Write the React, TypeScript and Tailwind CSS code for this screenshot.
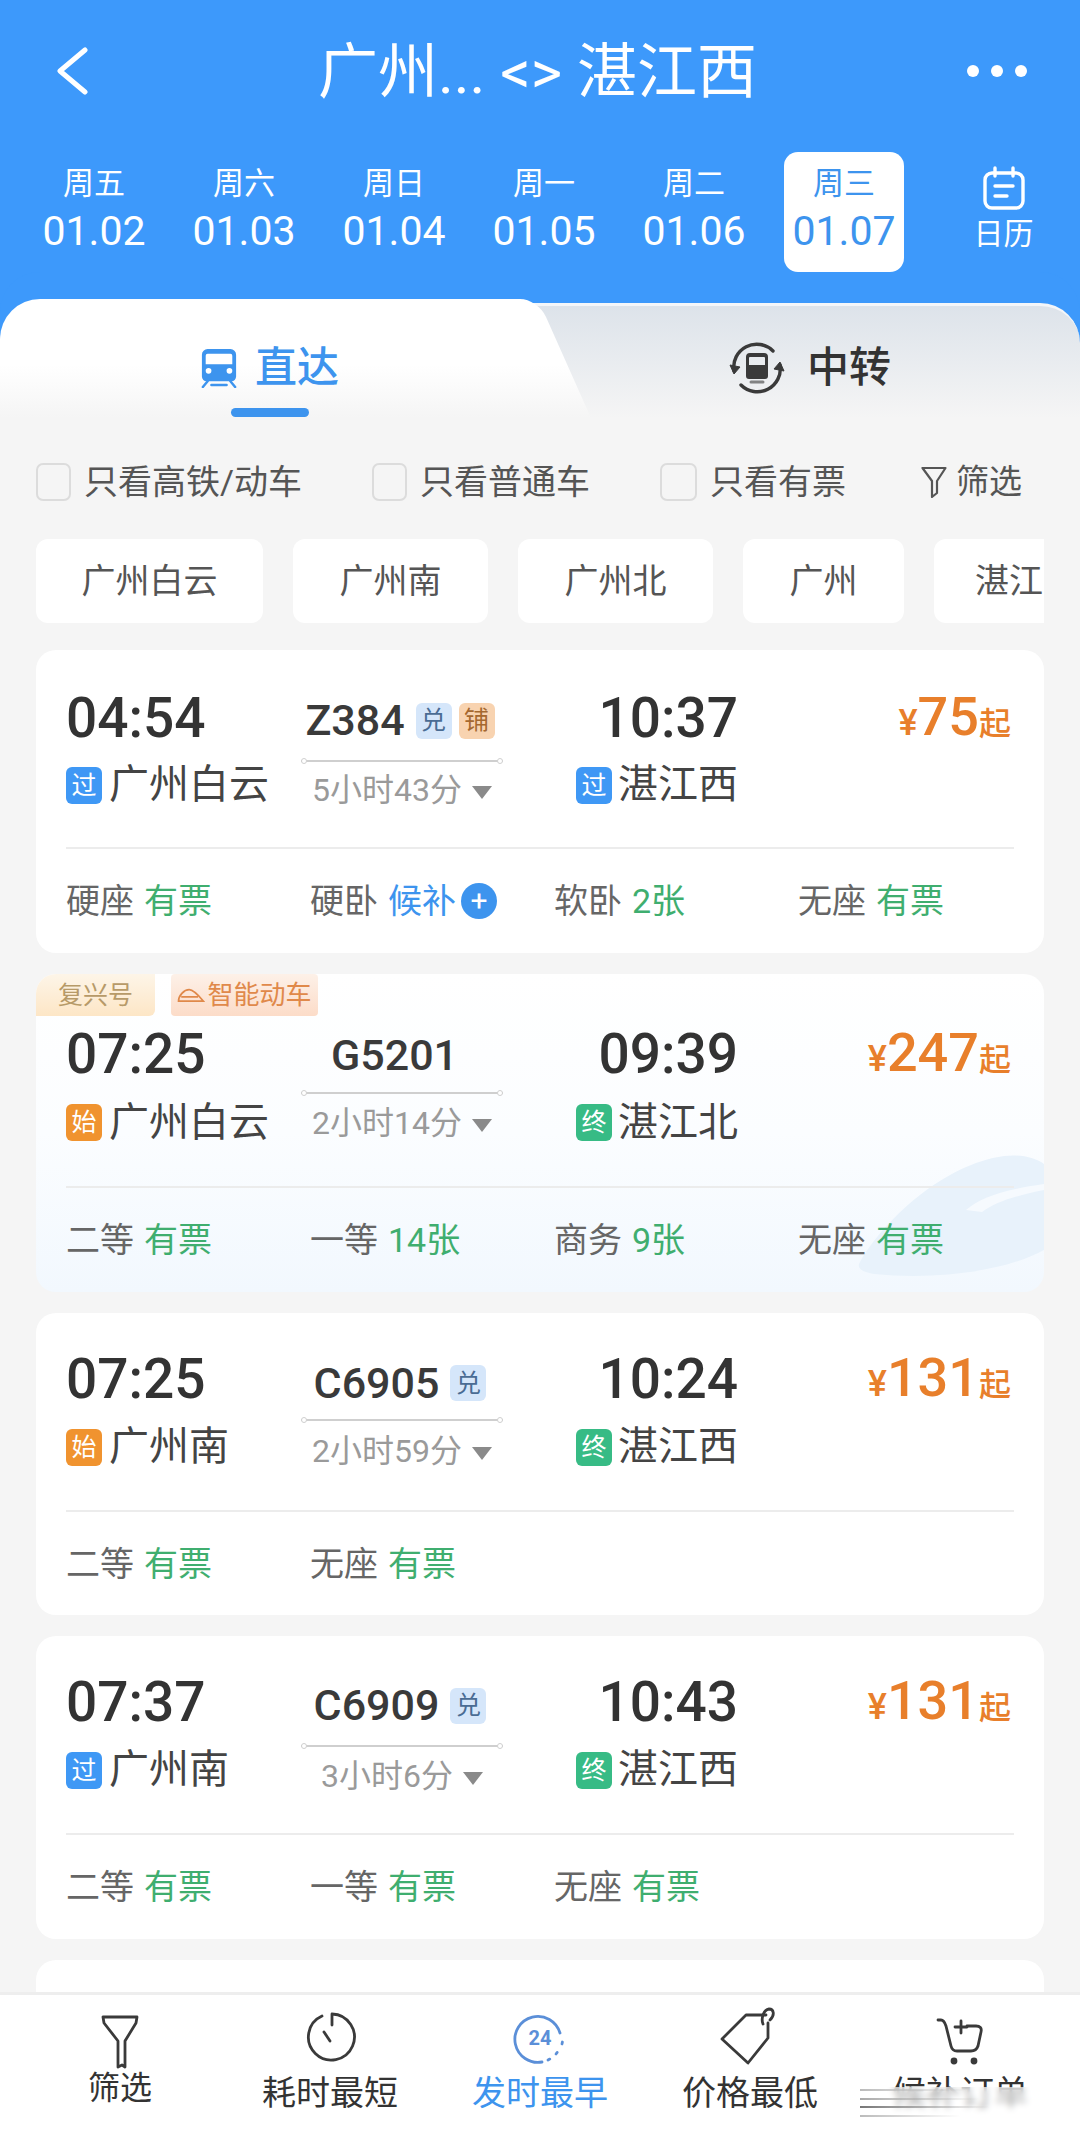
import type { ReactNode } from 'react';

type Seat = { name: string; value: string; tone?: 'green' | 'blue'; plus?: boolean };

type Train = {
  depart: string;
  arrive: string;
  code: string;
  flags: { label: string; className: string }[];
  from: string;
  fromTag: { label: string; className: string };
  to: string;
  toTag: { label: string; className: string };
  duration: string;
  price: string;
  seats: Seat[];
  cardClass: string;
  padClass: string;
  rowClass: string;
  codeClass: string;
  lineClass: string;
  fuxing?: boolean;
};

const tagPass = { label: '过', className: 'bg-[#3f98f5]' };
const tagStart = { label: '始', className: 'bg-[#f0932f]' };
const tagEnd = { label: '终', className: 'bg-[#37bb85]' };
const flagRedeem = { label: '兑', className: 'bg-[#d5e6fa] text-[#4a6c94]' };
const flagBerth = { label: '铺', className: 'bg-[#f8d3b0] text-[#a5682f]' };

const trains: Train[] = [
  {
    depart: '04:54',
    arrive: '10:37',
    code: 'Z384',
    flags: [flagRedeem, flagBerth],
    from: '广州白云',
    fromTag: tagPass,
    to: '湛江西',
    toTag: tagPass,
    duration: '5小时43分',
    price: '75',
    seats: [
      { name: '硬座', value: '有票' },
      { name: '硬卧', value: '候补', tone: 'blue', plus: true },
      { name: '软卧', value: '2张' },
      { name: '无座', value: '有票' },
    ],
    cardClass: 'h-[303px] bg-white',
    padClass: 'pt-[39px]',
    rowClass: 'h-[80px]',
    codeClass: 'pt-[7px]',
    lineClass: 'mt-[15px] mb-[8px]',
  },
  {
    depart: '07:25',
    arrive: '09:39',
    code: 'G5201',
    flags: [],
    from: '广州白云',
    fromTag: tagStart,
    to: '湛江北',
    toTag: tagEnd,
    duration: '2小时14分',
    price: '247',
    seats: [
      { name: '二等', value: '有票' },
      { name: '一等', value: '14张' },
      { name: '商务', value: '9张' },
      { name: '无座', value: '有票' },
    ],
    cardClass: 'h-[318px] bg-gradient-to-b from-white via-[#fbfdff] to-[#f2f8fe]',
    padClass: 'pt-[51px]',
    rowClass: 'h-[83px]',
    codeClass: 'pt-[4px]',
    lineClass: 'mt-[11px] mb-[9px]',
    fuxing: true,
  },
  {
    depart: '07:25',
    arrive: '10:24',
    code: 'C6905',
    flags: [flagRedeem],
    from: '广州南',
    fromTag: tagStart,
    to: '湛江西',
    toTag: tagEnd,
    duration: '2小时59分',
    price: '131',
    seats: [
      { name: '二等', value: '有票' },
      { name: '无座', value: '有票' },
    ],
    cardClass: 'h-[302px] bg-white',
    padClass: 'pt-[37px]',
    rowClass: 'h-[82px]',
    codeClass: 'pt-[10px]',
    lineClass: 'mt-[13px] mb-[10px]',
  },
  {
    depart: '07:37',
    arrive: '10:43',
    code: 'C6909',
    flags: [flagRedeem],
    from: '广州南',
    fromTag: tagPass,
    to: '湛江西',
    toTag: tagEnd,
    duration: '3小时6分',
    price: '131',
    seats: [
      { name: '二等', value: '有票' },
      { name: '一等', value: '有票' },
      { name: '无座', value: '有票' },
    ],
    cardClass: 'h-[303px] bg-white',
    padClass: 'pt-[37px]',
    rowClass: 'h-[82px]',
    codeClass: 'pt-[9px]',
    lineClass: 'mt-[16px] mb-[9px]',
  },
];

const dates = [
  { week: '周五', day: '01.02' },
  { week: '周六', day: '01.03' },
  { week: '周日', day: '01.04' },
  { week: '周一', day: '01.05' },
  { week: '周二', day: '01.06' },
  { week: '周三', day: '01.07', active: true },
];

const stations = [
  { name: '广州白云', className: 'w-[227px]' },
  { name: '广州南', className: 'w-[195px]' },
  { name: '广州北', className: 'w-[195px]' },
  { name: '广州', className: 'w-[161px]' },
  { name: '湛江', className: 'w-[150px] shrink-0' },
];

function TrainFront({ className }: { className: string }) {
  return (
    <svg viewBox="0 0 40 42" className={className} fill="currentColor">
      <path d="M8 1h24a6 6 0 0 1 6 6v23a5 5 0 0 1-5 5H7a5 5 0 0 1-5-5V7a6 6 0 0 1 6-6Zm0 5a2 2 0 0 0-2 2v9h28V8a2 2 0 0 0-2-2H8Z" fillRule="evenodd" />
      <circle cx="9" cy="24" r="3" fill="#fff" />
      <circle cx="31" cy="24" r="3" fill="#fff" />
      <path d="M8 35 3 41M32 35l5 6M12 39h16" stroke="currentColor" strokeWidth="2.6" strokeLinecap="round" fill="none" />
    </svg>
  );
}

function TransferIcon() {
  return (
    <svg viewBox="0 0 56 56" className="h-[56px] w-[56px] text-[#3a3a3a]" fill="none" stroke="currentColor">
      <path d="M5 31A23 23 0 0 1 44 11" strokeWidth="3.4" strokeLinecap="round" />
      <path d="M51 25A23 23 0 0 1 12 45" strokeWidth="3.4" strokeLinecap="round" />
      <path d="M1 25l4 9 6-7Z" fill="currentColor" strokeWidth="1" />
      <path d="M55 31l-4-9-6 7Z" fill="currentColor" strokeWidth="1" />
      <path
        d="M21 13h14a4 4 0 0 1 4 4v19a3 3 0 0 1-3 3H20a3 3 0 0 1-3-3V17a4 4 0 0 1 4-4Zm0 4a1 1 0 0 0-1 1v7h16v-7a1 1 0 0 0-1-1H21Z"
        fill="currentColor"
        fillRule="evenodd"
        stroke="none"
      />
      <path d="M22 42h12" strokeWidth="3" strokeLinecap="round" opacity="0.6" />
    </svg>
  );
}

function FunnelSmall() {
  return (
    <svg viewBox="0 0 26 32" className="h-[32px] w-[26px] text-[#555]" fill="none" stroke="currentColor" strokeWidth="2.2" strokeLinejoin="round">
      <path d="M1.5 2h23L16 15v12l-5 4V15Z" />
    </svg>
  );
}

function BottomIcon({ children }: { children: ReactNode }) {
  return (
    <svg viewBox="0 0 60 60" className="h-[60px] w-[60px] overflow-visible" fill="none" stroke="currentColor" strokeWidth="2.8" strokeLinecap="round" strokeLinejoin="round">
      {children}
    </svg>
  );
}

function Checkbox({ label, wide }: { label: string; wide?: boolean }) {
  return (
    <div className="flex items-center gap-[13px]">
      <span className={`h-[38px] rounded-[7px] border-2 border-[#dcdcdc] bg-[#f5f5f5] ${wide ? 'w-[37px]' : 'w-[35px]'}`} />
      <span className="text-[34px] leading-none text-[#555]">{label}</span>
    </div>
  );
}

function StationTag({ tag }: { tag: { label: string; className: string } }) {
  return (
    <span className={`flex h-[37px] w-[36px] items-center justify-center rounded-[6px] text-[25px] leading-none text-[#fff] ${tag.className}`}>
      {tag.label}
    </span>
  );
}

function TrainCard({ train }: { train: Train }) {
  return (
    <section className={`relative shrink-0 overflow-hidden rounded-[20px] px-[30px] ${train.cardClass} ${train.padClass}`}>
      {train.fuxing && (
        <>
          <svg viewBox="0 0 190 130" className="absolute bottom-[12px] right-0 h-[130px] w-[190px]">
            <path d="M6 112C30 70 90 14 150 6c18-2 32 2 40 8v86c-40 22-110 30-170 24-12-2-18-6-14-12Z" fill="#e8f2fb" />
            <path d="M112 60c14-12 36-20 78-26v6c-30 6-48 12-62 22Z" fill="#f6fafe" />
          </svg>
          <div className="absolute left-0 top-0 flex items-start gap-[16px]">
            <span className="flex h-[42px] w-[119px] items-center justify-center rounded-br-[6px] rounded-tl-[14px] bg-gradient-to-b from-[#fdf5e8] to-[#fde6c6] text-[25px] leading-none text-[#b79a68]">
              复兴号
            </span>
            <span className="flex h-[42px] w-[147px] items-center justify-center gap-[2px] rounded-[4px] bg-gradient-to-b from-[#fdf1e8] to-[#fcdcc8] text-[26px] leading-none text-[#e0894a]">
              <svg viewBox="0 0 30 18" className="h-[16px] w-[28px]" fill="none" stroke="currentColor" strokeWidth="2">
                <path d="M1 16c0-6 6-13 12-13 5 0 11 7 16 13Z" />
                <path d="M4 11h19" />
              </svg>
              智能动车
            </span>
          </div>
        </>
      )}

      <div className="relative grid grid-cols-[235px_202px_235px_273px]">
        <div className="h-[56px] text-[55px] font-medium leading-[59px] text-[#333]">{train.depart}</div>
        <div className={`flex h-[56px] items-center justify-center gap-[11px] pr-[4px] ${train.codeClass}`}>
          <span className="text-[43px] font-medium leading-none text-[#3a3a3a]">{train.code}</span>
          <span className="flex gap-[7px]">
            {train.flags.map((flag) => (
              <span
                key={flag.label}
                className={`flex h-[36px] w-[36px] items-center justify-center rounded-[6px] text-[25px] leading-none ${flag.className}`}
              >
                {flag.label}
              </span>
            ))}
          </span>
        </div>
        <div className="h-[56px] text-right text-[55px] font-medium leading-[59px] text-[#333]">{train.arrive}</div>
        <div className="flex h-[56px] items-baseline justify-end text-[#e87f2b]">
          <span className="text-[36px] font-medium leading-none">¥</span>
          <span className="text-[54px] font-medium leading-[56px]">{train.price}</span>
          <span className="text-[32px] font-medium leading-none">起</span>
        </div>

        <div className={`flex items-center gap-[7px] ${train.rowClass}`}>
          <StationTag tag={train.fromTag} />
          <span className="text-[40px] leading-none text-[#444]">{train.from}</span>
        </div>
        <div className={`flex flex-col items-center ${train.rowClass}`}>
          <div className={`relative h-[2px] w-full bg-[#cfcfcf] ${train.lineClass}`}>
            <span className="absolute -top-[2px] left-0 h-[6px] w-[6px] rounded-full border border-[#cfcfcf] bg-white" />
            <span className="absolute -top-[2px] right-0 h-[6px] w-[6px] rounded-full border border-[#cfcfcf] bg-white" />
          </div>
          <div className="flex items-center gap-[10px]">
            <span className="text-[32px] leading-[40px] text-[#9a9a9a]">{train.duration}</span>
            <span className="mt-[5px] h-0 w-0 border-x-[10px] border-t-[13px] border-x-transparent border-t-[#8a8a8a]" />
          </div>
        </div>
        <div className={`flex items-center justify-end gap-[6px] ${train.rowClass}`}>
          <StationTag tag={train.toTag} />
          <span className="text-[40px] leading-none text-[#444]">{train.to}</span>
        </div>
        <div className={train.rowClass} />
      </div>

      <div className="relative mt-[22px] h-[2px] bg-[#ececec]" />
      <div className="relative grid h-[106px] grid-cols-[244px_244px_244px_1fr] items-center pb-[3px]">
        {train.seats.map((seat) => (
          <div key={seat.name} className="flex items-center text-[34px] leading-none">
            <span className="text-[#666]">{seat.name}</span>
            <span className={`ml-[10px] ${seat.tone === 'blue' ? 'text-[#3d94ee]' : 'text-[#3fae6f]'}`}>{seat.value}</span>
            {seat.plus && (
              <span className="ml-[5px] flex h-[36px] w-[36px] items-center justify-center rounded-full bg-[#3d94ee] text-[30px] leading-none text-white">
                +
              </span>
            )}
          </div>
        ))}
      </div>
    </section>
  );
}

export default function App() {
  return (
    <div className="flex h-[2139px] w-[1080px] flex-col overflow-hidden bg-[#f5f5f5] font-[Roboto,'Noto_Sans_CJK_SC',sans-serif]">
      <header className="shrink-0 bg-[#3d99fb] text-white">
        <div className="flex h-[142px] items-center justify-between pl-[56px] pr-[53px]">
          <svg viewBox="0 0 32 48" className="h-[48px] w-[32px]" fill="none" stroke="currentColor" strokeWidth="5" strokeLinecap="round" strokeLinejoin="round">
            <path d="M29 3 4 24l25 21" />
          </svg>
          <h1 className="ml-[20px] pt-[4px] text-[60px] leading-none">广州... &lt;&gt; 湛江西</h1>
          <div className="flex gap-[12px]">
            <span className="h-[12px] w-[12px] rounded-full bg-white" />
            <span className="h-[12px] w-[12px] rounded-full bg-white" />
            <span className="h-[12px] w-[12px] rounded-full bg-white" />
          </div>
        </div>

        <div className="flex h-[130px] items-start pl-[19px] pt-[10px]">
          {dates.map((d) => (
            <div key={d.day} className={`flex h-[120px] w-[150px] flex-col items-center ${d.active ? 'text-[#3d94ee]' : ''}`}>
              <div className={`flex h-[120px] w-[120px] flex-col items-center rounded-[14px] pt-[14px] ${d.active ? 'bg-white' : ''}`}>
                <span className="text-[31px] leading-[36px]">{d.week}</span>
                <span className="mt-[4px] text-[41px] leading-[50px]">{d.day}</span>
              </div>
            </div>
          ))}
          <div className="flex h-[120px] flex-1 flex-col items-center pl-[8px] pt-[14px]">
            <svg viewBox="0 0 44 44" className="h-[44px] w-[44px]" fill="none" stroke="currentColor" strokeWidth="3.4" strokeLinecap="round">
              <rect x="3" y="7" width="38" height="35" rx="7" />
              <path d="M13 2v8M31 2v8M13 20h18M13 30h12" />
            </svg>
            <span className="mt-[6px] text-[30px] leading-[36px]">日历</span>
          </div>
        </div>

        <div className="relative h-[146px] overflow-hidden rounded-t-[40px] bg-[#3d99fb]">
          <div className="absolute inset-x-0 bottom-0 top-[31px] rounded-t-[40px] border-t-[3px] border-[#f4f6f9] bg-gradient-to-b from-[#dde3ea] to-[#f5f5f5]" />
          <div className="absolute bottom-0 left-0 top-[27px] w-[515px] rounded-tl-[40px] bg-gradient-to-b from-white from-[55%] to-[#f5f5f5]" />
          <div className="absolute bottom-0 left-[458px] top-[27px] w-[80px] origin-top skew-x-[24deg] rounded-tr-[18px] bg-gradient-to-b from-white from-[55%] to-[#f5f5f5]" />

          <div className="absolute left-[200px] top-[75px] flex items-center gap-[17px] text-[#3d94ee]">
            <TrainFront className="h-[40px] w-[38px]" />
            <span className="text-[42px] font-medium leading-none">直达</span>
          </div>
          <div className="absolute left-[231px] top-[136px] h-[9px] w-[78px] rounded-full bg-[#3d94ee]" />
          <div className="absolute left-[729px] top-[68px] flex items-center gap-[22px] text-[#333]">
            <TransferIcon />
            <span className="text-[42px] font-medium leading-none">中转</span>
          </div>
        </div>
      </header>

      <div className="flex h-[121px] shrink-0 items-center pl-[36px] pr-[58px] pt-[6px]">
        <Checkbox label="只看高铁/动车" />
        <div className="ml-[70px]">
          <Checkbox label="只看普通车" />
        </div>
        <div className="ml-[70px]">
          <Checkbox label="只看有票" wide />
        </div>
        <div className="ml-auto flex items-center gap-[9px]">
          <FunnelSmall />
          <span className="text-[33px] leading-none text-[#555]">筛选</span>
        </div>
      </div>

      <div className="mx-[36px] flex h-[84px] shrink-0 gap-[30px] overflow-hidden">
        {stations.map((s) => (
          <div
            key={s.name}
            className={`flex h-[84px] shrink-0 items-center justify-center rounded-[12px] bg-white text-[34px] leading-none text-[#555] ${s.className}`}
          >
            {s.name}
          </div>
        ))}
      </div>

      <main className="mx-[36px] mt-[27px] flex min-h-0 flex-1 flex-col gap-[21px] overflow-hidden">
        {trains.map((t) => (
          <TrainCard key={t.code} train={t} />
        ))}
        <div className="h-[60px] shrink-0 rounded-t-[20px] bg-white" />
      </main>

      <footer className="relative grid h-[147px] shrink-0 grid-cols-[repeat(5,210px)] border-t-[3px] border-[#eeeeee] bg-white pl-[15px]">
        <div className="flex flex-col items-center pt-[14px] text-[#3a3a3a]">
          <BottomIcon>
            <path d="M13 8h34l-1 6-11 18v26l-3-2-4 2V32L14 14Z" />
          </BottomIcon>
          <span className="text-[32px] leading-[38px] text-[#333]">筛选</span>
        </div>
        <div className="flex flex-col items-center pt-[14px] text-[#3a3a3a]">
          <BottomIcon>
            <path d="M22 7A23 23 0 1 0 32 5v11" />
            <path d="m24 23 6 9" />
          </BottomIcon>
          <span className="mt-[5px] text-[34px] leading-[38px] text-[#333]">耗时最短</span>
        </div>
        <div className="flex flex-col items-center pt-[14px] text-[#5b8fd8]">
          <BottomIcon>
            <path d="M50 24A23 23 0 1 0 32 53" />
            <path d="M38 51l4-2M46 45l3-4M52 35l1-5" strokeDasharray="2 4" />
            <text x="30" y="36" textAnchor="middle" fontSize="20" fontWeight="700" fill="currentColor" stroke="none">
              24
            </text>
          </BottomIcon>
          <span className="mt-[5px] text-[34px] leading-[38px] text-[#3d94ee]">发时最早</span>
        </div>
        <div className="flex flex-col items-center pt-[14px] text-[#3a3a3a]">
          <BottomIcon>
            <path d="M46 6H26L2 30l26 24 20-25V14" />
            <path d="M43 15c-2-5 0-14 6-15 5 0 6 6 1 11" />
          </BottomIcon>
          <span className="mt-[5px] text-[34px] leading-[38px] text-[#333]">价格最低</span>
        </div>
        <div className="flex flex-col items-center pt-[14px] text-[#3a3a3a]">
          <BottomIcon>
            <path d="M8 11h3c3 0 4 3 5 6l5 20c1 4 3 5 6 5h14c4 0 6-2 7-5l3-14c1-4-1-6-5-6h-9" />
            <path d="M25 18h12M31 12v12" />
            <circle cx="24" cy="52" r="2" fill="currentColor" />
            <circle cx="44" cy="52" r="2" fill="currentColor" />
          </BottomIcon>
          <span className="mt-[5px] text-[34px] leading-[38px] text-[#333]">候补订单</span>
        </div>
        {/* smeared strip over the last label */}
        <div className="absolute bottom-[20px] right-[25px] flex h-[32px] w-[195px] flex-col justify-between bg-white/60 py-[2px] backdrop-blur-[3px]">
          <span className="h-[2px] w-[110px] bg-gradient-to-r from-[#bbbbbb] to-transparent" />
          <span className="h-[2px] w-[120px] bg-gradient-to-r from-[#aaaaaa] to-transparent" />
          <span className="h-[2px] w-[130px] bg-gradient-to-r from-[#777777] to-transparent" />
          <span className="h-[2px] w-[100px] bg-gradient-to-r from-[#bbbbbb] to-transparent" />
        </div>
      </footer>
    </div>
  );
}
